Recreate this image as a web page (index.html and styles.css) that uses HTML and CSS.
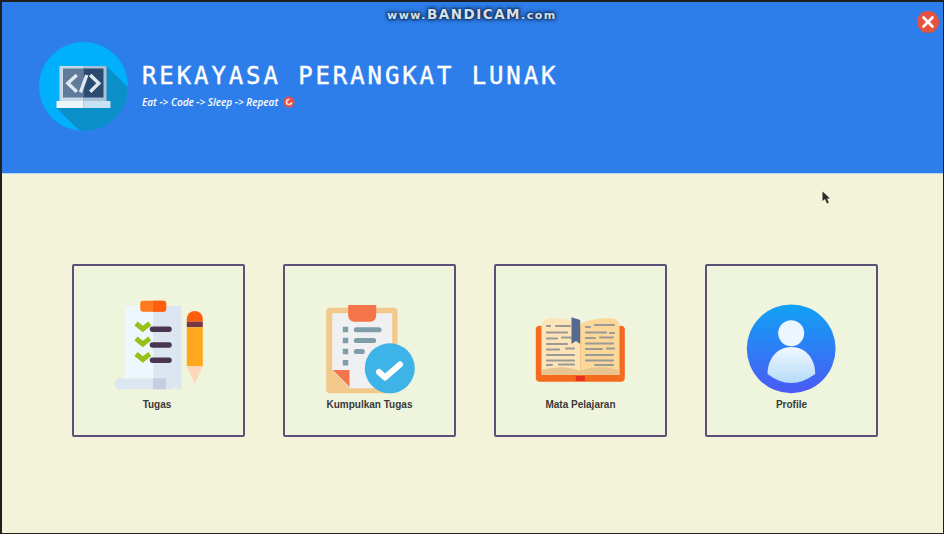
FILE: index.html
```html
<!DOCTYPE html>
<html lang="en">
<head>
    <meta charset="UTF-8">
    <meta name="viewport" content="width=device-width, initial-scale=1.0">
    <title>Rekayasa Perangkat Lunak</title>
    <link rel="stylesheet" href="styles.css">
</head>
<body>
    <div class="frame">
        <div class="header">
            <svg class="logo" viewBox="0 0 89 89">
                <defs>
                    <clipPath id="logo-clip"><circle cx="44.5" cy="44.5" r="44.5"/></clipPath>
                </defs>
                <circle cx="44.5" cy="44.5" r="44.5" fill="#00b0fb"/>
                <polygon points="67.5,24 110,66 110,110 62,110 17.5,66" fill="#0a8fc8" clip-path="url(#logo-clip)"/>
                <rect x="20.5" y="24" width="24" height="35" fill="#c9d9e8"/>
                <rect x="44.5" y="24" width="23" height="35" fill="#a9c0d6"/>
                <rect x="24" y="26.500" width="20.500" height="29" fill="#5f7b99"/>
                <rect x="44.5" y="26.500" width="20" height="29" fill="#2b4a70"/>
                <rect x="17.500" y="59" width="27" height="7" fill="#eef6fc"/>
                <rect x="44.5" y="59" width="27" height="7" fill="#c8e1f3"/>
                <path d="M37.800 33 L28.800 41.300 L37.800 49.700 M51.200 33 L59.800 41.300 L51.200 49.700 M47.800 33 L41.500 50.300" fill="none" stroke="#dfe8f0" stroke-width="3.400"/>
            </svg>
            <div class="brand">
                <h1 class="brand-title">REKAYASA PERANGKAT LUNAK</h1>
                <div class="brand-tag">
                    <span>Eat -&gt; Code -&gt; Sleep -&gt; Repeat</span>
                    <svg class="tag-icon" viewBox="0 0 12 12">
                        <circle cx="6" cy="6" r="5.500" fill="#e8504a"/>
                        <circle cx="6" cy="6" r="2.500" fill="none" stroke="#fbe3dc" stroke-width="1.500" stroke-dasharray="12 3.700"/>
                    </svg>
                </div>
            </div>
        </div>

        <div class="menu">
            <div class="card">
                <svg class="card-icon" viewBox="0 0 92 96">
                    <path d="M1.500 85.800 a5.500 5.500 0 0 1 5.500 -5.500 H60 V91.300 H7 a5.500 5.500 0 0 1 -5.500 -5.500 Z" fill="#dbe6f0"/>
                    <path d="M11.800 8 H40.200 V80.300 H11.800 Z" fill="#eef7fd"/>
                    <path d="M40.200 8 H68.500 V91.300 H66 Q60 91 58 84 L57 80.300 H40.200 Z" fill="#dbe6f0"/>
                    <rect x="40.200" y="80.300" width="13" height="11" fill="#c3cfe0"/>
                    <rect x="27.200" y="2.700" width="26" height="11" rx="3" fill="#ff7a1f"/>
                    <path d="M40.200 2.700 H50.200 a3 3 0 0 1 3 3 V10.700 a3 3 0 0 1 -3 3 H40.200 Z" fill="#ff5e0e"/>
                    <path d="M23 25.500 L29.800 31 L36.800 25.500 M23 40.500 L29.800 46 L36.800 40.500 M23 56 L29.800 61.500 L36.800 56" fill="none" stroke="#97c11a" stroke-width="5"/>
                    <path d="M39.500 31.300 H56 M39.500 47 H56 M39.500 62.300 H56" stroke="#4a3550" stroke-width="5.500" stroke-linecap="round"/>
                    <path d="M73.800 23.700 V21 a8 8 0 0 1 16 0 V23.700 Z" fill="#ff5e0e"/>
                    <rect x="73.800" y="23.700" width="16" height="5.600" fill="#77383f"/>
                    <rect x="73.800" y="29.300" width="16" height="38.700" fill="#ffa81e"/>
                    <polygon points="73.800,68 89.800,68 81.800,86" fill="#fcd8b9"/>
                </svg>
                <span class="card-label card-label-short">Tugas</span>
            </div>

            <div class="card">
                <svg class="card-icon" viewBox="0 0 92 96">
                    <rect x="2.200" y="9.700" width="71.300" height="85.600" rx="4" fill="#f3c98b"/>
                    <polygon points="8.200,15.300 68.200,15.300 68.200,90.300 25.500,90.300 8.200,72" fill="#eef0f2"/>
                    <polygon points="8.800,72 25.500,72 25.500,89" fill="#f4754a"/>
                    <path d="M24.200 7 H52.200 V17.700 a6 6 0 0 1 -6 6 H30.200 a6 6 0 0 1 -6 -6 Z" fill="#f4754a"/>
                    <path d="M18.800 28.700 h5.400 v5.600 h-5.400 Z M18.800 39.700 h5.400 v5.600 h-5.400 Z M18.800 50.700 h5.400 v5.600 h-5.400 Z M18.800 62 h5.400 v5.600 h-5.400 Z" fill="#7f9da8"/>
                    <path d="M32.300 31.700 H55 M32.300 42.500 H49.700 M32.300 53.500 H38.300" stroke="#7f9da8" stroke-width="5" stroke-linecap="round"/>
                    <circle cx="65.800" cy="70.300" r="25" fill="#3db3e8"/>
                    <path d="M55 74 L61 79.500 L76 66.500" fill="none" stroke="#fff" stroke-width="6" stroke-linecap="round" stroke-linejoin="round"/>
                </svg>
                <span class="card-label">Kumpulkan Tugas</span>
            </div>

            <div class="card">
                <svg class="card-icon" viewBox="0 0 92 96">
                    <rect x="0.800" y="27.700" width="89" height="56" rx="4" fill="#f46a1e"/>
                    <path d="M6.500 28 Q7.500 20.300 15 20.300 Q33 19.500 45.200 26 V77 H6.500 Z" fill="#fde4b8"/>
                    <path d="M45.200 26 Q58 19.500 76 20.300 Q83.500 20.300 84.500 28 V77 H45.200 Z" fill="#fbd79a"/>
                    <path d="M6.500 72 Q28 66 45.200 73 Q62 66 84.500 72 V77 H6.500 Z" fill="#e8c48e"/>
                    <g fill="none" stroke="#9a9a96" stroke-width="2.200" stroke-linecap="round">
                        <path d="M12 28 H15 M21 28 H35 M12 34.500 H32 M12 40.500 H22 M27 39.500 H36 M12 46 H32 M12 51.500 H24 M31 50.500 H39 M12 57 H39 M12 62.500 H39 M12 67 H17 M24 66.500 H39"/>
                        <path d="M51 29 H55 M60 27 H79 M51 34.500 H71 M75 35 H79 M51 40 H60 M65 39.500 H78 M51 45.500 H78 M51 51 H67 M72 50.500 H79 M51 57 H78 M51 62.500 H78 M60 67 H78"/>
                    </g>
                    <polygon points="36.500,19.300 45.200,22 45.200,46 41,43 36.500,46" fill="#56698f"/>
                    <rect x="40.800" y="78" width="9" height="5" fill="#e8301c"/>
                </svg>
                <span class="card-label">Mata Pelajaran</span>
            </div>

            <div class="card">
                <svg class="card-icon" viewBox="1 0 92 96">
                    <defs>
                        <linearGradient id="profile-bg" x1="0" y1="0" x2="0" y2="1">
                            <stop offset="0" stop-color="#10a2f5"/>
                            <stop offset="1" stop-color="#4a5af5"/>
                        </linearGradient>
                        <linearGradient id="profile-body" x1="0" y1="0" x2="0" y2="1">
                            <stop offset="0" stop-color="#f0f8fe"/>
                            <stop offset="1" stop-color="#b6dbf8"/>
                        </linearGradient>
                    </defs>
                    <circle cx="46.200" cy="50.800" r="44.400" fill="url(#profile-bg)"/>
                    <circle cx="46.200" cy="35.300" r="13" fill="#edf6fd"/>
                    <path d="M22.500 76 C22.500 60 33 49 46.300 49 C60 49 70.200 60 70.200 76 Q46 94 22.500 76 Z" fill="url(#profile-body)"/>
                </svg>
                <span class="card-label">Profile</span>
            </div>
        </div>

        <div class="watermark"><small>www.</small>BANDICAM<small>.com</small></div>
        <div class="close-btn">
            <svg viewBox="0 0 22 22"><path d="M6.500 6.500 L15.500 15.500 M15.500 6.500 L6.500 15.500" stroke="#fff" stroke-width="2.600" stroke-linecap="round"/></svg>
        </div>
        <svg class="cursor" viewBox="0 0 10 14"><polygon points="0.500,0.500 0.500,10 3,8 5,12.500 6.800,11.700 5,7.500 8,7.500" fill="#2b2b2b"/></svg>
    </div>
</body>
</html>
```

FILE: styles.css
```css
html, body {
    margin: 0;
    padding: 0;
}
body {
    font-family: 'Liberation Sans', Arial, sans-serif;
    background-color: #1f1f1f;
}
.frame {
    position: relative;
    box-sizing: border-box;
    display: flex;
    flex-direction: column;
    width: 944px;
    height: 534px;
    padding: 2px 1px 1px 2px;
    overflow: hidden;
}
.header {
    display: flex;
    box-sizing: border-box;
    height: 172px;
    padding: 40px 0 0 37px;
    background-color: #2d7eea;
    border-bottom: 1px solid #b5d4f8;
}
.logo {
    width: 89px;
    height: 89px;
}
.brand {
    margin-left: 14px;
    padding-top: 20px;
    color: #fff;
}
.brand-title {
    margin: 0;
    font-family: 'DejaVu Sans Mono', monospace;
    font-size: 24px;
    font-weight: normal;
    line-height: 28px;
    letter-spacing: 2.900px;
    -webkit-text-stroke: 0.400px #fff;
    white-space: nowrap;
}
.brand-tag {
    display: flex;
    align-items: center;
    gap: 5px;
    margin-top: 5px;
    font-family: 'Open Sans', sans-serif;
    font-size: 10px;
    font-weight: 600;
    font-style: italic;
    white-space: nowrap;
}
.tag-icon {
    width: 12px;
    height: 12px;
}
.menu {
    flex: 1;
    display: flex;
    align-items: flex-start;
    gap: 38px;
    padding: 90px 0 0 70px;
    background-color: #f3f3d9;
}
.card {
    box-sizing: border-box;
    display: flex;
    flex-direction: column;
    align-items: center;
    width: 173px;
    height: 173px;
    padding-top: 32px;
    background-color: #eff4dd;
    border: 2px solid #5d5078;
    border-radius: 2px;
}
.card-icon {
    flex: none;
    width: 92px;
    height: 96px;
}
.card-label {
    margin-top: 5px;
    font-size: 10px;
    font-weight: bold;
    color: #3a3a3a;
}
.card-label-short {
    margin-right: 3px;
}
.watermark {
    position: absolute;
    top: 5px;
    left: 387px;
    font-family: 'DejaVu Sans', sans-serif;
    font-size: 13.500px;
    font-weight: bold;
    letter-spacing: 1.500px;
    line-height: 18px;
    color: #d8e0e8;
    text-shadow: 0 0 2px #14305c, 0 0 3px #14305c, 0 0 4px #14305c, 0 0 5px #14305c;
    white-space: nowrap;
}
.watermark small {
    font-size: 11px;
}
.close-btn {
    position: absolute;
    top: 11px;
    left: 917px;
    width: 22px;
    height: 22px;
    background-color: #e5533f;
    border-radius: 50%;
}
.close-btn svg {
    display: block;
}
.cursor {
    position: absolute;
    top: 191px;
    left: 822px;
    width: 10px;
    height: 14px;
}
```
